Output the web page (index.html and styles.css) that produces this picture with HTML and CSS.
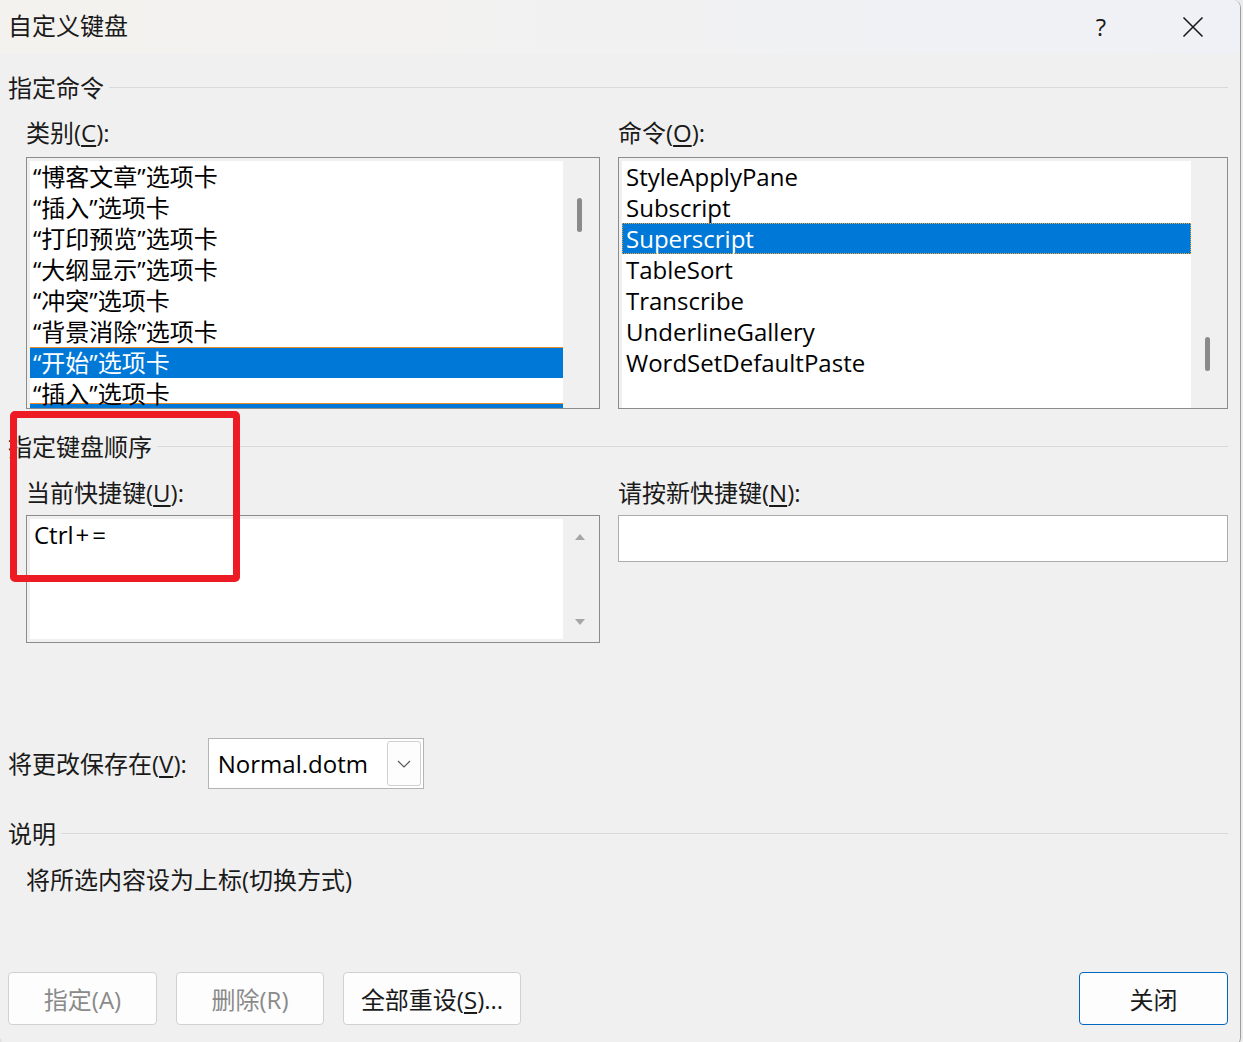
FILE: index.html
```html
<!DOCTYPE html>
<html lang="zh-CN">
<head>
    <meta charset="UTF-8">
    <title>自定义键盘</title>
    <link rel="stylesheet" href="styles.css">
</head>
<body>

    <div class="window">
        <div class="titlebar">
            <span class="title">自定义键盘</span>
            <span class="tb-btn help">?</span>
            <span class="tb-btn">
                <svg width="22" height="22" viewBox="0 0 22 22">
                    <path d="M1.5 1.5 L20.5 20.5 M20.5 1.5 L1.5 20.5" stroke="#1a1a1a" stroke-width="1.6" fill="none"/>
                </svg>
            </span>
        </div>

        <div class="content">
            <div class="group-head"><span>指定命令</span></div>
            <div class="cols">
                <div class="col col-left">
                    <div class="field-label">类别(<u>C</u>):</div>
                    <div class="listbox">
                        <div class="list-items">
                            <div class="item">“博客文章”选项卡</div>
                            <div class="item">“插入”选项卡</div>
                            <div class="item">“打印预览”选项卡</div>
                            <div class="item">“大纲显示”选项卡</div>
                            <div class="item">“冲突”选项卡</div>
                            <div class="item">“背景消除”选项卡</div>
                            <div class="item sel sel-top">“开始”选项卡</div>
                            <div class="item cut">“插入”选项卡</div>
                        </div>
                        <div class="scroll"><div class="thumb"></div></div>
                    </div>
                </div>
                <div class="col col-right">
                    <div class="field-label">命令(<u>O</u>):</div>
                    <div class="listbox">
                        <div class="list-items cmd">
                            <div class="item">StyleApplyPane</div>
                            <div class="item">Subscript</div>
                            <div class="item sel focus">Superscript</div>
                            <div class="item">TableSort</div>
                            <div class="item">Transcribe</div>
                            <div class="item">UnderlineGallery</div>
                            <div class="item">WordSetDefaultPaste</div>
                        </div>
                        <div class="scroll"><div class="thumb thumb-low"></div></div>
                    </div>
                </div>
            </div>

            <div class="group-head second"><span>指定键盘顺序</span></div>
            <div class="cols">
                <div class="col col-left">
                    <div class="field-label small-gap">当前快捷键(<u>U</u>):</div>
                    <div class="keybox">
                        <div class="key-items">Ctrl<span class="keys">+=</span></div>
                        <div class="arrows">
                            <span class="tri-up"></span>
                            <span class="tri-down"></span>
                        </div>
                    </div>
                </div>
                <div class="col col-right">
                    <div class="field-label small-gap">请按新快捷键(<u>N</u>):</div>
                    <div class="newkey"></div>
                </div>
            </div>

            <div class="save-row">
                <span>将更改保存在(<u>V</u>):</span>
                <div class="combo">
                    <span class="combo-text">Normal.dotm</span>
                    <span class="combo-btn">
                        <svg width="14" height="8" viewBox="0 0 14 8">
                            <path d="M1 1 L7 7 L13 1" stroke="#555" stroke-width="1.2" fill="none"/>
                        </svg>
                    </span>
                </div>
            </div>

            <div class="group-head third"><span>说明</span></div>
            <div class="desc">将所选内容设为上标(切换方式)</div>

            <div class="buttons">
                <button class="btn disabled w149">指定(A)</button>
                <button class="btn disabled w148">删除(R)</button>
                <button class="btn w178">全部重设(<u>S</u>)...</button>
                <button class="btn w149 primary">关闭</button>
            </div>
        </div>

        <div class="annot"></div>
    </div>

</body>
</html>
```

FILE: styles.css
```css
body {
    margin: 0;
    background: #ededed;
    font-family: "Open Sans", "Noto Sans CJK SC", sans-serif;
    font-size: 24px;
    color: #1a1a1a;
    overflow: hidden;
}
.window {
    position: relative;
    width: 1241px;
    height: 1046px;
    box-sizing: border-box;
    background: #f0f0f0;
    border-right: 1px solid #9d9d9d;
    border-bottom: 1px solid #9d9d9d;
    border-radius: 0 8px 8px 8px;
    overflow: hidden;
}
.titlebar {
    height: 54px;
    display: flex;
    align-items: center;
    padding: 0 24px 0 8px;
    background: linear-gradient(90deg, #f4f2ee, #eff1f6);
}
.title {
    flex: 1;
    line-height: 30px;
    margin-top: -2px;
}
.tb-btn {
    width: 46px;
    display: flex;
    justify-content: center;
    align-items: center;
}
.help {
    margin-right: 46px;
    font-size: 24px;
    line-height: 30px;
}
.content {
    padding: 17px 12px 0 8px;
}
.group-head {
    display: flex;
    align-items: center;
    gap: 5px;
    height: 30px;
}
.group-head::after {
    content: '';
    flex: 1;
    border-top: 1px solid #d9d9d9;
    margin-top: 2px;
}
.group-head.second {
    margin-top: 21px;
}
.group-head.third {
    margin-top: 28px;
}
.cols {
    display: flex;
    gap: 18px;
    padding-left: 18px;
}
.col-left {
    flex: 0 0 574px;
}
.col-right {
    flex: 1;
}
.field-label {
    line-height: 30px;
    margin: 17px 0 9px;
}
.field-label.small-gap {
    margin: 18px 0 7px;
}
u {
    text-underline-offset: 3px;
}
.listbox {
    height: 252px;
    box-sizing: border-box;
    border: 1px solid #8b8b8b;
    background: #f0f0f0;
    padding: 3px 3px 0 3px;
    display: flex;
}
.list-items {
    flex: 1;
    background: #fff;
    overflow: hidden;
}
.item {
    line-height: 31px;
    height: 31px;
    padding-left: 3px;
    white-space: nowrap;
    color: #000;
}
.cmd .item {
    padding-left: 4px;
}
.item.sel {
    background: #0078d7;
    color: #fff;
}
.item.sel-top {
    box-shadow: inset 0 1px 0 #e98a2c;
}
.item.focus {
    outline: 1px dotted #f0a53c;
    outline-offset: -1px;
}
.item.cut {
    box-shadow: inset 0 -5px 0 #0078d7, inset 0 -6px 0 #e98a2c;
}
.scroll {
    width: 33px;
    display: flex;
    justify-content: center;
}
.thumb {
    width: 5px;
    height: 34px;
    margin-top: 37px;
    border-radius: 3px;
    background: #8a8a8a;
}
.thumb-low {
    margin-top: 176px;
}
.keybox {
    height: 128px;
    box-sizing: border-box;
    border: 1px solid #8b8b8b;
    background: #f0f0f0;
    padding: 3px;
    display: flex;
}
.key-items {
    flex: 1;
    background: #fff;
    padding: 0 0 0 4px;
    line-height: 31px;
    color: #000;
}
.keys {
    letter-spacing: 3px;
    margin-left: 2px;
}
.arrows {
    width: 33px;
    display: flex;
    flex-direction: column;
    align-items: center;
    justify-content: space-between;
    padding: 15px 0 14px;
    box-sizing: border-box;
}
.tri-up,
.tri-down {
    width: 0;
    height: 0;
    border-left: 5px solid transparent;
    border-right: 5px solid transparent;
}
.tri-up {
    border-bottom: 6px solid #a6a6a6;
}
.tri-down {
    border-top: 6px solid #a6a6a6;
}
.newkey {
    height: 47px;
    box-sizing: border-box;
    border: 1px solid #acacac;
    background: #fff;
}
.save-row {
    margin-top: 95px;
    display: flex;
    align-items: center;
    gap: 21px;
    line-height: 30px;
}
.combo {
    width: 216px;
    height: 51px;
    box-sizing: border-box;
    border: 1px solid #b4b4b4;
    background: #fff;
    padding: 2px;
    display: flex;
    align-items: center;
}
.combo-text {
    flex: 1;
    padding-left: 7px;
    color: #000;
}
.combo-btn {
    width: 34px;
    align-self: stretch;
    box-sizing: border-box;
    border: 1px solid #d0d0d0;
    border-radius: 3px;
    background: #fdfdfd;
    display: flex;
    align-items: center;
    justify-content: center;
}
.desc {
    margin-top: 18px;
    padding-left: 18px;
    line-height: 30px;
}
.buttons {
    margin-top: 77px;
    display: flex;
    gap: 19px;
}
.btn {
    height: 53px;
    box-sizing: border-box;
    border: 1px solid #d1d1d1;
    border-radius: 4px;
    background: #fdfdfd;
    font-family: inherit;
    font-size: 24px;
    color: #1a1a1a;
    padding: 0;
}
.btn.disabled {
    color: #8a8a8a;
}
.btn.primary {
    margin-left: auto;
    border-color: #0067c0;
}
.w149 {
    width: 149px;
}
.w148 {
    width: 148px;
}
.w178 {
    width: 178px;
}
.annot {
    position: absolute;
    left: 10px;
    top: 411px;
    width: 230px;
    height: 171px;
    box-sizing: border-box;
    border: 7px solid #ed1c24;
    border-radius: 5px;
}
```
